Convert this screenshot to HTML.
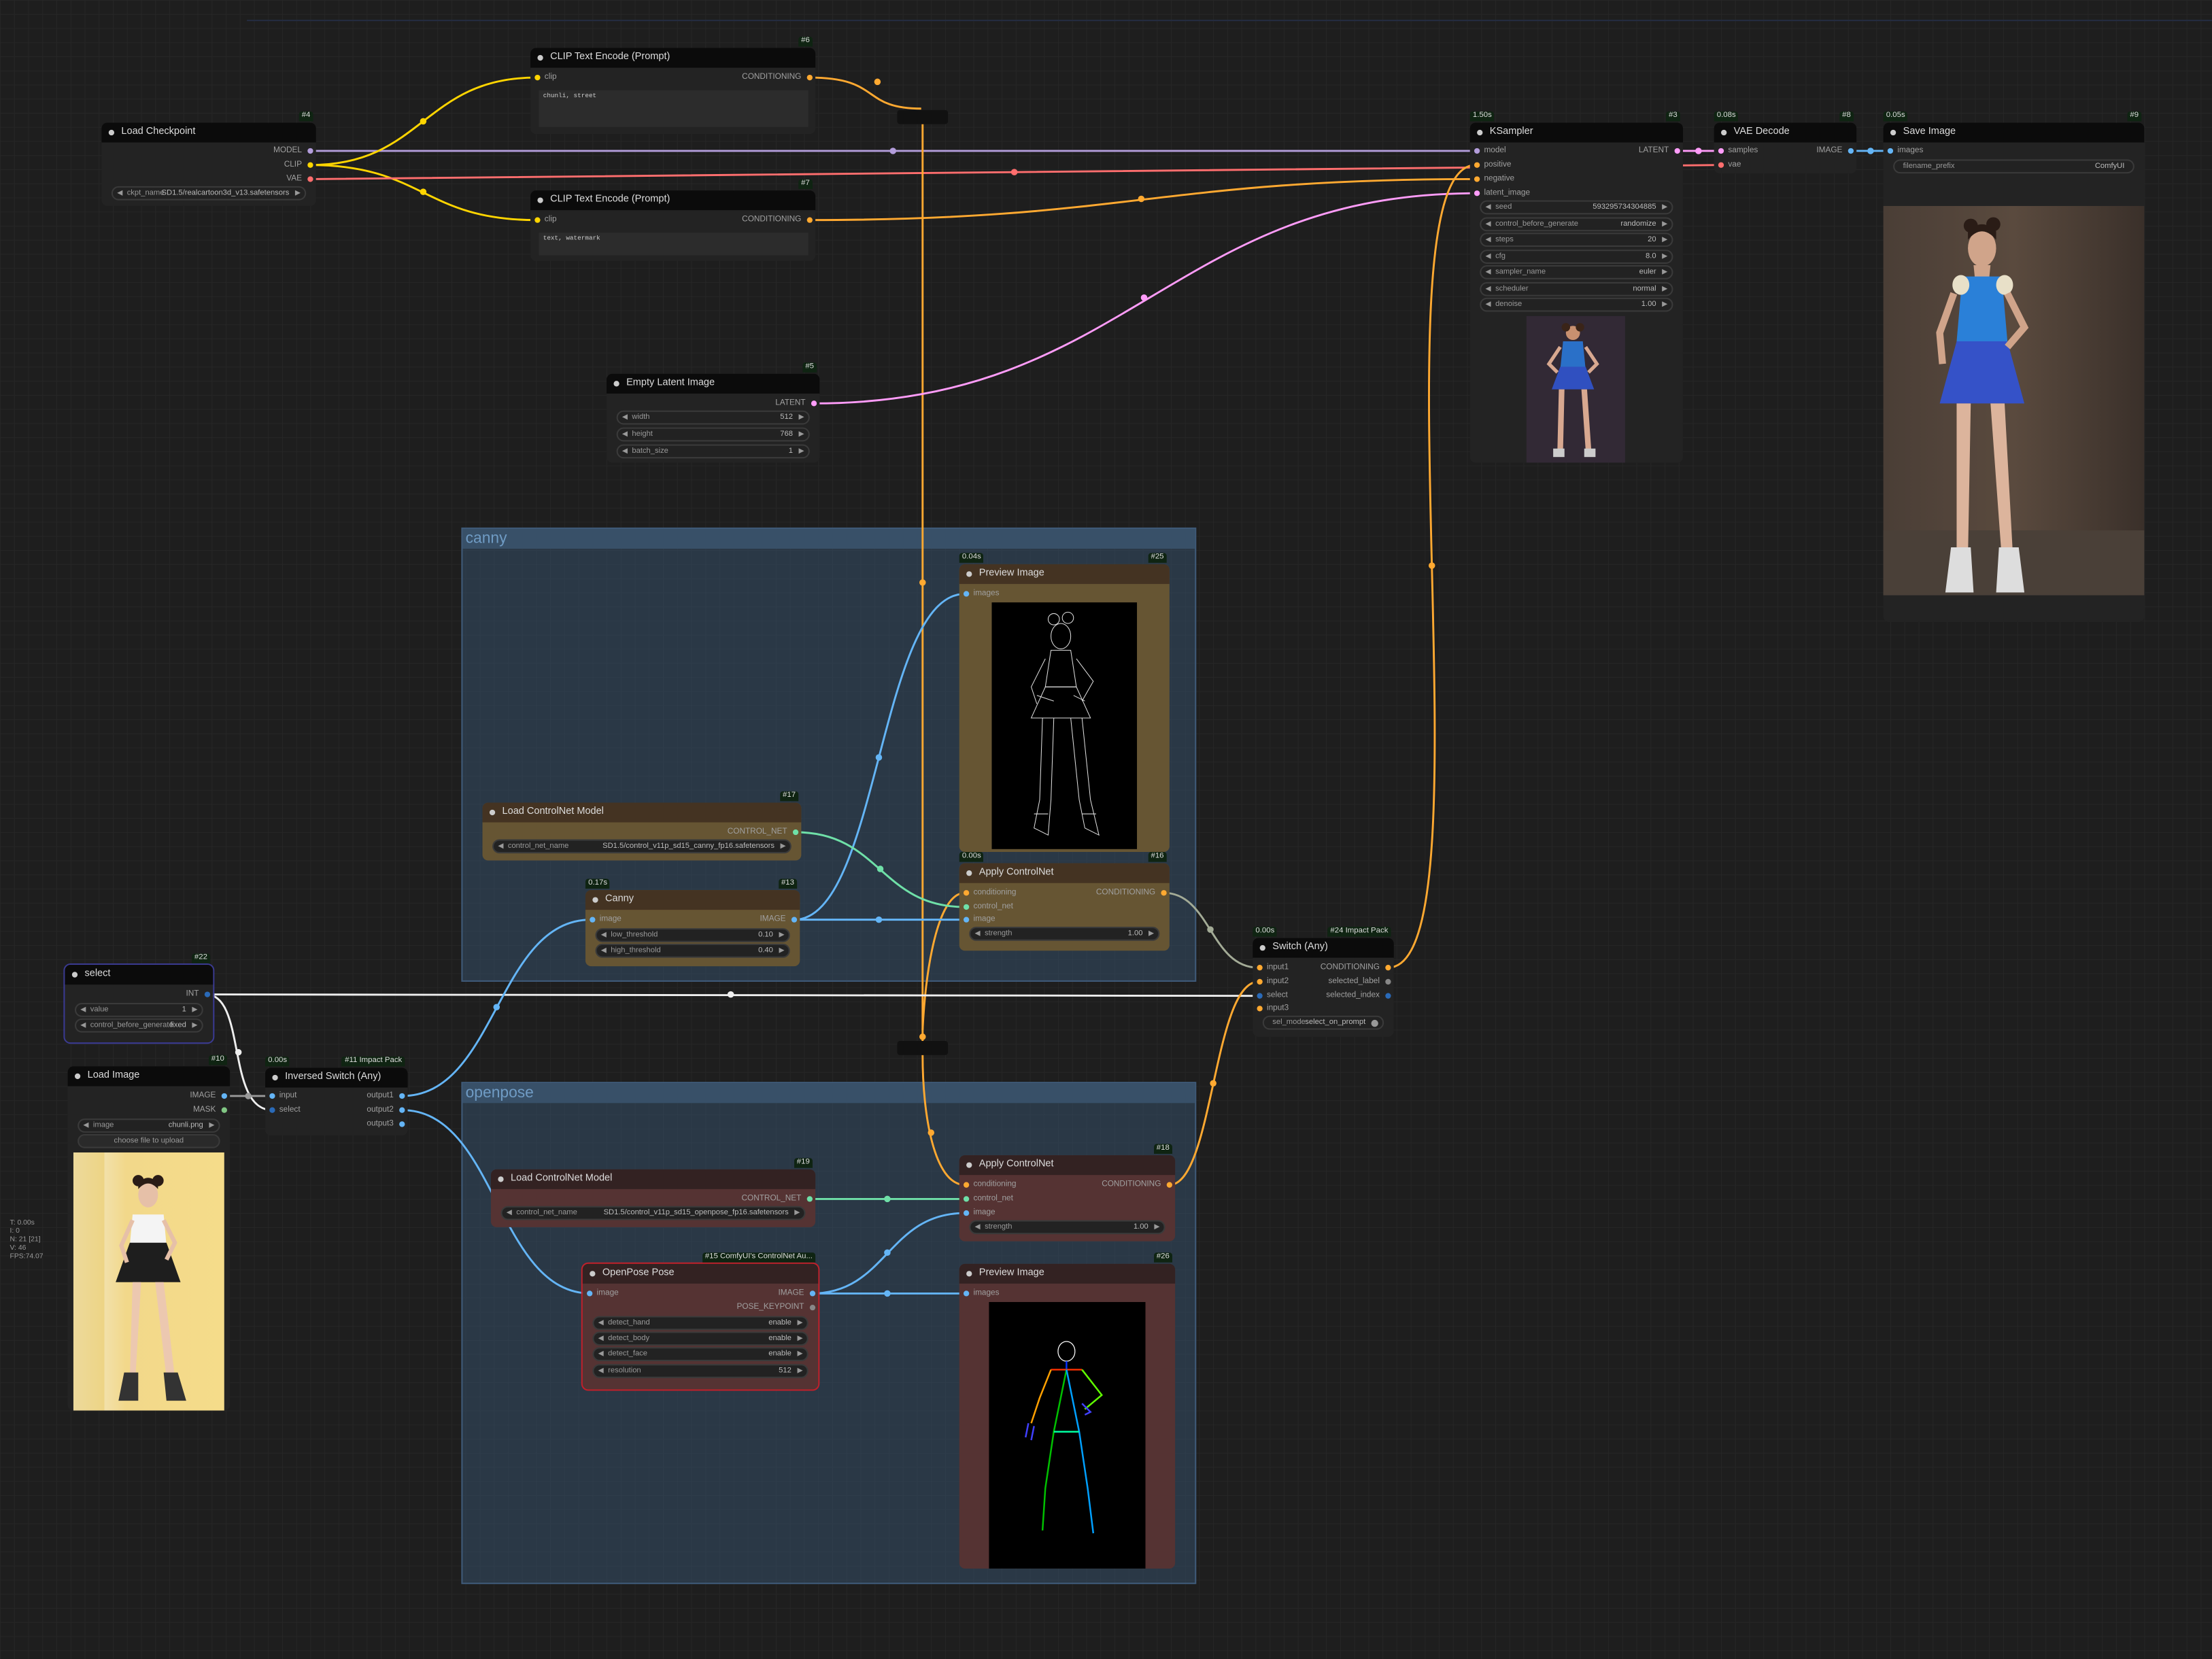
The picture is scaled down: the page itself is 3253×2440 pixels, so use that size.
<!DOCTYPE html>
<html><head><meta charset="utf-8">
<style>
html,body{margin:0;padding:0;width:3253px;height:2440px;overflow:hidden;background:#1c1c1c}
#w{position:absolute;left:0;top:0;width:1568px;height:1176px;transform:scale(2.0746);transform-origin:0 0;
background-color:#1e1e1e;background-image:linear-gradient(#262626 0.5px,transparent 0.5px),linear-gradient(90deg,#262626 0.5px,transparent 0.5px);background-size:10px 10px;font-family:"Liberation Sans",sans-serif;overflow:hidden}
.g{position:absolute;background:rgba(52,78,104,0.55);border:0.5px solid #3f5a78}
.g .gh{height:14px;background:#385068;color:#6f9bc4;font-size:11px;line-height:14px;padding-left:2px}
svg.wires{position:absolute;left:0;top:0}
.n{position:absolute;background:#232323;border-radius:4px;font-size:5.7px;color:#a0a0a0}
.t{height:14px;background:#0b0b0b;border-radius:4px 4px 0 0;color:#ddd;font-size:7px;line-height:14px;padding-left:14px;position:relative;white-space:nowrap}
.t:before{content:"";position:absolute;left:5px;top:5px;width:4px;height:4px;border-radius:50%;background:#ccc}
.cn{background:#665533}.cn .t{background:#443322}
.op{background:#553333}.op .t{background:#332222}
.r{position:absolute;left:0;right:0;height:8px;line-height:8px;white-space:nowrap}
.r .l{position:absolute;left:10px}
.r .o{position:absolute;right:10px}
.dl,.dr{position:absolute;top:2px;width:4px;height:4px;border-radius:50%}
.dl{left:2.5px}.dr{right:2.5px}
.wd{position:absolute;left:7px;right:7px;height:8px;background:#222;border:0.6px solid #3a3a3a;border-radius:5px;line-height:8px;color:#999;font-size:5.4px;white-space:nowrap;overflow:hidden}
.wd .a{position:absolute;left:3px;font-size:5px}
.wd .b{position:absolute;right:3px;font-size:5px}
.wd .k{position:absolute;left:10px}
.wd .v{position:absolute;right:11px;color:#bbb}
.bd{position:absolute;top:-8px;height:7px;line-height:7px;background:#0f2412;color:#ddd;font-size:5.5px;padding:0 2px;border-radius:2px 2px 0 0;white-space:nowrap}
.ta{position:absolute;left:6px;right:5px;background:#2c2c2c;color:#ccc;font-family:"Liberation Mono",monospace;font-size:4.5px;padding:2px 3px;box-sizing:border-box}
.rr{position:absolute;width:36px;height:10px;background:#111;border-radius:2px}
</style></head><body>
<div id="w">
<div style="position:absolute;left:175px;top:14px;width:1393px;height:0.5px;background:#242c40"></div>

<div class="g" style="left:327px;top:374px;width:519px;height:320px"><div class="gh">canny</div></div>
<div class="g" style="left:327px;top:767px;width:519px;height:354px"><div class="gh">openpose</div></div>

<svg class="wires" width="1568" height="1176" viewBox="0 0 1568 1176" fill="none" stroke-width="1.4">
<path d="M220 107 L1046 107" stroke="#b39ddb"/>
<path d="M220 117 C300 117 300 55 380 55" stroke="#ffd500"/>
<path d="M220 117 C300 117 300 156 380 156" stroke="#ffd500"/>
<path d="M220 127 C500 127 940 117 1219 117" stroke="#ff6e6e"/>
<path d="M574 55 C625 55 610 77 653 77" stroke="#ffa931"/>
<path d="M654 88 L654 738" stroke="#ffa931"/>
<path d="M654 730 C656 690 664 633 684 633" stroke="#ffa931"/>
<path d="M654 748 C654 790 662 840 684 840" stroke="#ffa931"/>
<path d="M574 156 C800 156 820 127 1046 127" stroke="#ffa931"/>
<path d="M577 286 C800 286 830 137 1046 137" stroke="#ff9cf9"/>
<path d="M1188 107 L1219 107" stroke="#ff9cf9"/>
<path d="M1311 107 L1339 107" stroke="#64b5f6"/>
<path d="M984 686 C1060 686 970 117 1046 117" stroke="#ffa931"/>
<path d="M563 652 C623 652 623 421 684 421" stroke="#64b5f6"/>
<path d="M563 652 L684 652" stroke="#64b5f6"/>
<path d="M564 590 C624 590 624 643 684 643" stroke="#6fe0a8"/>
<path d="M825 633 C858 633 858 686 892 686" stroke="#a3ab96"/>
<path d="M146 705 L892 706" stroke="#eeeeee"/>
<path d="M146 705 C175 705 160 787 193 787" stroke="#eeeeee"/>
<path d="M159 777 L193 777" stroke="#999"/>
<path d="M285 777 C352 777 352 652 419 652" stroke="#64b5f6"/>
<path d="M285 787 C352 787 352 917 419 917" stroke="#64b5f6"/>
<path d="M575 917 L684 917" stroke="#64b5f6"/>
<path d="M575 917 C629 917 629 860 684 860" stroke="#64b5f6"/>
<path d="M574 850 L684 850" stroke="#6fe0a8"/>
<path d="M829 840 C860 840 860 696 892 696" stroke="#ffa931"/>
<g stroke="none">
<circle cx="633" cy="107" r="2.3" fill="#b39ddb"/>
<circle cx="300" cy="86" r="2.3" fill="#ffd500"/><circle cx="300" cy="136" r="2.3" fill="#ffd500"/>
<circle cx="719" cy="122" r="2.3" fill="#ff6e6e"/>
<circle cx="622" cy="58" r="2.3" fill="#ffa931"/><circle cx="654" cy="413" r="2.3" fill="#ffa931"/><circle cx="654" cy="735" r="2.3" fill="#ffa931"/>
<circle cx="660" cy="803" r="2.3" fill="#ffa931"/><circle cx="809" cy="141" r="2.3" fill="#ffa931"/>
<circle cx="811" cy="211" r="2.3" fill="#ff9cf9"/><circle cx="1204" cy="107" r="2.3" fill="#ff9cf9"/>
<circle cx="1326" cy="107" r="2.3" fill="#64b5f6"/><circle cx="1015" cy="401" r="2.3" fill="#ffa931"/>
<circle cx="623" cy="537" r="2.3" fill="#64b5f6"/><circle cx="623" cy="652" r="2.3" fill="#64b5f6"/>
<circle cx="624" cy="616" r="2.3" fill="#6fe0a8"/><circle cx="858" cy="659" r="2.3" fill="#a3ab96"/>
<circle cx="518" cy="705" r="2.3" fill="#eee"/><circle cx="169" cy="746" r="2.3" fill="#eee"/>
<circle cx="176" cy="777" r="2.3" fill="#999"/><circle cx="352" cy="714" r="2.3" fill="#64b5f6"/>
<circle cx="629" cy="917" r="2.3" fill="#64b5f6"/><circle cx="629" cy="888" r="2.3" fill="#64b5f6"/>
<circle cx="629" cy="850" r="2.3" fill="#6fe0a8"/><circle cx="860" cy="768" r="2.3" fill="#ffa931"/>
</g>
</svg>

<div class="rr" style="left:636px;top:78px"></div>
<div class="rr" style="left:636px;top:738px"></div>

<div class="n" style="left:72px;top:87px;width:152px;height:59px"><div class="bd" style="right:2px">#4</div><div class="t">Load Checkpoint</div>
<div class="r" style="top:16px"><span class="o">MODEL</span><i class="dr" style="background:#b39ddb"></i></div>
<div class="r" style="top:26px"><span class="o">CLIP</span><i class="dr" style="background:#ffd500"></i></div>
<div class="r" style="top:36px"><span class="o">VAE</span><i class="dr" style="background:#ff6e6e"></i></div>
<div class="wd" style="top:45px"><span class="a">◀</span><span class="k">ckpt_name</span><span class="v">SD1.5/realcartoon3d_v13.safetensors</span><span class="b">▶</span></div></div>

<div class="n" style="left:376px;top:34px;width:202px;height:61px"><div class="bd" style="right:2px">#6</div><div class="t">CLIP Text Encode (Prompt)</div>
<div class="r" style="top:17px"><i class="dl" style="background:#ffd500"></i><span class="l">clip</span><span class="o">CONDITIONING</span><i class="dr" style="background:#ffa931"></i></div>
<div class="ta" style="top:30px;height:26px">chunli, street</div></div>
<div class="n" style="left:376px;top:135px;width:202px;height:50px"><div class="bd" style="right:2px">#7</div><div class="t">CLIP Text Encode (Prompt)</div>
<div class="r" style="top:17px"><i class="dl" style="background:#ffd500"></i><span class="l">clip</span><span class="o">CONDITIONING</span><i class="dr" style="background:#ffa931"></i></div>
<div class="ta" style="top:30px;height:16px">text, watermark</div></div>

<div class="n" style="left:1042px;top:87px;width:151px;height:241px"><div class="bd" style="left:0">1.50s</div><div class="bd" style="right:2px">#3</div><div class="t">KSampler</div>
<div class="r" style="top:16px"><i class="dl" style="background:#b39ddb"></i><span class="l">model</span><span class="o">LATENT</span><i class="dr" style="background:#ff9cf9"></i></div>
<div class="r" style="top:26px"><i class="dl" style="background:#ffa931"></i><span class="l">positive</span></div>
<div class="r" style="top:36px"><i class="dl" style="background:#ffa931"></i><span class="l">negative</span></div>
<div class="r" style="top:46px"><i class="dl" style="background:#ff9cf9"></i><span class="l">latent_image</span></div>
<div class="wd" style="top:55px"><span class="a">◀</span><span class="k">seed</span><span class="v">593295734304885</span><span class="b">▶</span></div>
<div class="wd" style="top:67px"><span class="a">◀</span><span class="k">control_before_generate</span><span class="v">randomize</span><span class="b">▶</span></div>
<div class="wd" style="top:78px"><span class="a">◀</span><span class="k">steps</span><span class="v">20</span><span class="b">▶</span></div>
<div class="wd" style="top:90px"><span class="a">◀</span><span class="k">cfg</span><span class="v">8.0</span><span class="b">▶</span></div>
<div class="wd" style="top:101px"><span class="a">◀</span><span class="k">sampler_name</span><span class="v">euler</span><span class="b">▶</span></div>
<div class="wd" style="top:113px"><span class="a">◀</span><span class="k">scheduler</span><span class="v">normal</span><span class="b">▶</span></div>
<div class="wd" style="top:124px"><span class="a">◀</span><span class="k">denoise</span><span class="v">1.00</span><span class="b">▶</span></div>
<svg style="position:absolute;left:40px;top:137px" width="70" height="104" viewBox="0 0 70 104">
<rect width="70" height="104" fill="#2a2230"/><rect x="0" y="0" width="70" height="104" fill="#3a2f3a" opacity="0.5"/>
<circle cx="33" cy="12" r="5" fill="#c89070"/><circle cx="28" cy="8" r="3" fill="#3a2418"/><circle cx="38" cy="8" r="3" fill="#3a2418"/>
<path d="M26 18 L40 18 L42 38 L24 38Z" fill="#2a70c8"/><path d="M24 36 L42 36 L48 52 L18 52Z" fill="#3050c0"/>
<path d="M23 52 L27 52 L26 95 L22 95Z M39 52 L43 52 L46 95 L42 95Z" fill="#d8a890"/>
<rect x="19" y="94" width="8" height="6" fill="#ccc"/><rect x="41" y="94" width="8" height="6" fill="#ccc"/>
<path d="M24 22 L16 34 L22 40 M42 22 L50 34 L44 40" stroke="#d8a890" stroke-width="2.5" fill="none"/></svg></div>

<div class="n" style="left:1215px;top:87px;width:101px;height:36px"><div class="bd" style="left:0">0.08s</div><div class="bd" style="right:2px">#8</div><div class="t">VAE Decode</div>
<div class="r" style="top:16px"><i class="dl" style="background:#ff9cf9"></i><span class="l">samples</span><span class="o">IMAGE</span><i class="dr" style="background:#64b5f6"></i></div>
<div class="r" style="top:26px"><i class="dl" style="background:#ff6e6e"></i><span class="l">vae</span></div></div>

<div class="n" style="left:1335px;top:87px;width:185px;height:354px"><div class="bd" style="left:0">0.05s</div><div class="bd" style="right:2px">#9</div><div class="t">Save Image</div>
<div class="r" style="top:16px"><i class="dl" style="background:#64b5f6"></i><span class="l">images</span></div>
<div class="wd" style="top:26px"><span class="k" style="left:6px">filename_prefix</span><span class="v" style="right:6px">ComfyUI</span></div>
<svg style="position:absolute;left:0;top:59px" width="185" height="276" viewBox="0 0 185 276">
<defs><linearGradient id="sg" x1="0" x2="1"><stop offset="0" stop-color="#4a3e36"/><stop offset="0.5" stop-color="#5a4a3e"/><stop offset="1" stop-color="#3a302a"/></linearGradient></defs>
<rect width="185" height="276" fill="url(#sg)"/>
<rect x="0" y="230" width="185" height="46" fill="#4a4038"/>
<circle cx="62" cy="14" r="5" fill="#2a1c16"/><circle cx="78" cy="13" r="5" fill="#2a1c16"/>
<ellipse cx="70" cy="30" rx="10" ry="13" fill="#d0a48a"/><path d="M60 24 Q70 12 80 24 L80 18 Q70 8 60 18Z" fill="#2a1c16"/>
<path d="M64 42 L76 42 L75 52 L65 52Z" fill="#d0a48a"/>
<path d="M56 50 L84 50 L88 96 L52 96Z" fill="#2a80d8"/>
<ellipse cx="55" cy="56" rx="6" ry="7" fill="#e8e0c8"/><ellipse cx="86" cy="56" rx="6" ry="7" fill="#e8e0c8"/>
<path d="M52 96 L88 96 L100 140 L40 140Z" fill="#3552c8"/>
<path d="M50 62 L40 90 L42 112 M88 62 L100 86 L88 100" stroke="#d0a48a" stroke-width="5" fill="none"/>
<path d="M52 140 L62 140 L60 250 L52 250Z M76 140 L86 140 L92 250 L84 250Z" fill="#dcb49c"/>
<path d="M48 242 L62 242 L64 274 L44 274Z M82 242 L96 242 L100 274 L80 274Z" fill="#ddd"/>
</svg></div>

<div class="n" style="left:430px;top:265px;width:151px;height:63px"><div class="bd" style="right:2px">#5</div><div class="t">Empty Latent Image</div>
<div class="r" style="top:17px"><span class="o">LATENT</span><i class="dr" style="background:#ff9cf9"></i></div>
<div class="wd" style="top:26px"><span class="a">◀</span><span class="k">width</span><span class="v">512</span><span class="b">▶</span></div>
<div class="wd" style="top:38px"><span class="a">◀</span><span class="k">height</span><span class="v">768</span><span class="b">▶</span></div>
<div class="wd" style="top:50px"><span class="a">◀</span><span class="k">batch_size</span><span class="v">1</span><span class="b">▶</span></div></div>

<div class="n cn" style="left:680px;top:400px;width:149px;height:204px"><div class="bd" style="left:0">0.04s</div><div class="bd" style="right:2px">#25</div><div class="t">Preview Image</div>
<div class="r" style="top:17px"><i class="dl" style="background:#64b5f6"></i><span class="l">images</span></div>
<svg style="position:absolute;left:23px;top:27px" width="103" height="175" viewBox="0 0 103 175">
<rect width="103" height="175" fill="#000"/>
<g stroke="#ddd" stroke-width="0.5" fill="none">
<circle cx="44" cy="12" r="4"/><circle cx="54" cy="11" r="4"/><ellipse cx="49" cy="24" rx="7" ry="9"/>
<path d="M42 34 L56 34 L60 60 L38 60Z"/><path d="M38 60 L60 60 L70 82 L28 82Z"/>
<path d="M38 40 L28 60 L32 72 M60 40 L72 56 L64 70"/>
<path d="M36 82 L34 140 L30 160 L40 165 L42 140 L44 82 M56 82 L62 140 L66 160 L76 165 L70 140 L64 82"/>
<path d="M32 66 L44 70 M58 66 L66 70 M30 150 L40 150 M64 150 L74 150"/></g></svg></div>

<div class="n cn" style="left:680px;top:612px;width:149px;height:62px"><div class="bd" style="left:0">0.00s</div><div class="bd" style="right:2px">#16</div><div class="t">Apply ControlNet</div>
<div class="r" style="top:17px"><i class="dl" style="background:#ffa931"></i><span class="l">conditioning</span><span class="o">CONDITIONING</span><i class="dr" style="background:#ffa931"></i></div>
<div class="r" style="top:27px"><i class="dl" style="background:#6fe0a8"></i><span class="l">control_net</span></div>
<div class="r" style="top:36px"><i class="dl" style="background:#64b5f6"></i><span class="l">image</span></div>
<div class="wd" style="top:45px"><span class="a">◀</span><span class="k">strength</span><span class="v">1.00</span><span class="b">▶</span></div></div>

<div class="n cn" style="left:342px;top:569px;width:226px;height:41px"><div class="bd" style="right:2px">#17</div><div class="t">Load ControlNet Model</div>
<div class="r" style="top:17px"><span class="o">CONTROL_NET</span><i class="dr" style="background:#6fe0a8"></i></div>
<div class="wd" style="top:26px"><span class="a">◀</span><span class="k">control_net_name</span><span class="v">SD1.5/control_v11p_sd15_canny_fp16.safetensors</span><span class="b">▶</span></div></div>

<div class="n cn" style="left:415px;top:631px;width:152px;height:54px"><div class="bd" style="left:0">0.17s</div><div class="bd" style="right:2px">#13</div><div class="t">Canny</div>
<div class="r" style="top:17px"><i class="dl" style="background:#64b5f6"></i><span class="l">image</span><span class="o">IMAGE</span><i class="dr" style="background:#64b5f6"></i></div>
<div class="wd" style="top:27px"><span class="a">◀</span><span class="k">low_threshold</span><span class="v">0.10</span><span class="b">▶</span></div>
<div class="wd" style="top:38px"><span class="a">◀</span><span class="k">high_threshold</span><span class="v">0.40</span><span class="b">▶</span></div></div>

<div class="n" style="left:46px;top:684px;width:105px;height:55px;outline:1px solid #3a3a90"><div class="bd" style="right:2px">#22</div><div class="t">select</div>
<div class="r" style="top:17px"><span class="o">INT</span><i class="dr" style="background:#2a6ab8"></i></div>
<div class="wd" style="top:27px"><span class="a">◀</span><span class="k">value</span><span class="v">1</span><span class="b">▶</span></div>
<div class="wd" style="top:38px"><span class="a">◀</span><span class="k">control_before_generate</span><span class="v">fixed</span><span class="b">▶</span></div></div>

<div class="n" style="left:888px;top:665px;width:100px;height:70px"><div class="bd" style="left:0">0.00s</div><div class="bd" style="right:2px">#24 Impact Pack</div><div class="t">Switch (Any)</div>
<div class="r" style="top:17px"><i class="dl" style="background:#ffa931"></i><span class="l">input1</span><span class="o">CONDITIONING</span><i class="dr" style="background:#ffa931"></i></div>
<div class="r" style="top:27px"><i class="dl" style="background:#ffa931"></i><span class="l">input2</span><span class="o">selected_label</span><i class="dr" style="background:#888"></i></div>
<div class="r" style="top:37px"><i class="dl" style="background:#2a6ab8"></i><span class="l">select</span><span class="o">selected_index</span><i class="dr" style="background:#2a6ab8"></i></div>
<div class="r" style="top:46px"><i class="dl" style="background:#ffa931"></i><span class="l">input3</span></div>
<div class="wd" style="top:55px"><span class="k" style="left:6px">sel_mode</span><span class="v" style="right:12px">select_on_prompt</span><i style="position:absolute;right:3px;top:1.5px;width:5px;height:5px;border-radius:50%;background:#999"></i></div></div>

<div class="n" style="left:48px;top:756px;width:115px;height:244px"><div class="bd" style="right:2px">#10</div><div class="t">Load Image</div>
<div class="r" style="top:17px"><span class="o">IMAGE</span><i class="dr" style="background:#64b5f6"></i></div>
<div class="r" style="top:27px"><span class="o">MASK</span><i class="dr" style="background:#81c784"></i></div>
<div class="wd" style="top:37px"><span class="a">◀</span><span class="k">image</span><span class="v">chunli.png</span><span class="b">▶</span></div>
<div class="wd" style="top:48px;text-align:center;background:#2a2a2a">choose file to upload</div>
<svg style="position:absolute;left:4px;top:61px" width="107" height="183" viewBox="0 0 107 183">
<defs><linearGradient id="lg" x1="0" x2="1"><stop offset="0" stop-color="#f3ecd8"/><stop offset="0.35" stop-color="#f2d88a"/><stop offset="1" stop-color="#f5dc8a"/></linearGradient></defs>
<rect width="107" height="183" fill="url(#lg)"/><rect x="0" y="0" width="22" height="183" fill="#e8c860" opacity="0.5"/>
<circle cx="46" cy="20" r="4" fill="#2a1c16"/><circle cx="60" cy="20" r="4" fill="#2a1c16"/>
<ellipse cx="53" cy="30" rx="7" ry="9" fill="#e6c0a8"/><path d="M46 26 Q53 18 60 26 L60 22 Q53 14 46 22Z" fill="#2a1c16"/>
<path d="M42 44 L64 44 L66 66 L40 66Z" fill="#f4f4f4"/>
<path d="M40 64 L66 64 L76 92 L30 92Z" fill="#1e1e1e"/>
<path d="M42 48 L34 66 L38 78 M64 48 L72 64 L66 76" stroke="#e6c0a8" stroke-width="3" fill="none"/>
<path d="M42 92 L48 92 L44 160 L40 160Z M58 92 L64 92 L72 160 L66 160Z" fill="#ecc8b0"/>
<path d="M36 156 L46 156 L46 176 L32 176Z M64 156 L74 156 L80 176 L66 176Z" fill="#333"/>
</svg></div>

<div class="n" style="left:188px;top:757px;width:101px;height:48px"><div class="bd" style="left:0">0.00s</div><div class="bd" style="right:2px">#11 Impact Pack</div><div class="t">Inversed Switch (Any)</div>
<div class="r" style="top:16px"><i class="dl" style="background:#64b5f6"></i><span class="l">input</span><span class="o">output1</span><i class="dr" style="background:#64b5f6"></i></div>
<div class="r" style="top:26px"><i class="dl" style="background:#2a6ab8"></i><span class="l">select</span><span class="o">output2</span><i class="dr" style="background:#64b5f6"></i></div>
<div class="r" style="top:36px"><span class="o">output3</span><i class="dr" style="background:#64b5f6"></i></div></div>

<div class="n op" style="left:348px;top:829px;width:230px;height:41px"><div class="bd" style="right:2px">#19</div><div class="t">Load ControlNet Model</div>
<div class="r" style="top:17px"><span class="o">CONTROL_NET</span><i class="dr" style="background:#6fe0a8"></i></div>
<div class="wd" style="top:26px"><span class="a">◀</span><span class="k">control_net_name</span><span class="v">SD1.5/control_v11p_sd15_openpose_fp16.safetensors</span><span class="b">▶</span></div></div>

<div class="n op" style="left:680px;top:819px;width:153px;height:61px"><div class="bd" style="right:2px">#18</div><div class="t">Apply ControlNet</div>
<div class="r" style="top:17px"><i class="dl" style="background:#ffa931"></i><span class="l">conditioning</span><span class="o">CONDITIONING</span><i class="dr" style="background:#ffa931"></i></div>
<div class="r" style="top:27px"><i class="dl" style="background:#6fe0a8"></i><span class="l">control_net</span></div>
<div class="r" style="top:37px"><i class="dl" style="background:#64b5f6"></i><span class="l">image</span></div>
<div class="wd" style="top:46px"><span class="a">◀</span><span class="k">strength</span><span class="v">1.00</span><span class="b">▶</span></div></div>

<div class="n op" style="left:413px;top:896px;width:167px;height:89px;outline:1.5px solid #c0202a"><div class="bd" style="right:2px">#15 ComfyUI's ControlNet Au...</div><div class="t">OpenPose Pose</div>
<div class="r" style="top:17px"><i class="dl" style="background:#64b5f6"></i><span class="l">image</span><span class="o">IMAGE</span><i class="dr" style="background:#64b5f6"></i></div>
<div class="r" style="top:27px"><span class="o">POSE_KEYPOINT</span><i class="dr" style="background:#888"></i></div>
<div class="wd" style="top:37px"><span class="a">◀</span><span class="k">detect_hand</span><span class="v">enable</span><span class="b">▶</span></div>
<div class="wd" style="top:48px"><span class="a">◀</span><span class="k">detect_body</span><span class="v">enable</span><span class="b">▶</span></div>
<div class="wd" style="top:59px"><span class="a">◀</span><span class="k">detect_face</span><span class="v">enable</span><span class="b">▶</span></div>
<div class="wd" style="top:71px"><span class="a">◀</span><span class="k">resolution</span><span class="v">512</span><span class="b">▶</span></div></div>

<div class="n op" style="left:680px;top:896px;width:153px;height:216px"><div class="bd" style="right:2px">#26</div><div class="t">Preview Image</div>
<div class="r" style="top:17px"><i class="dl" style="background:#64b5f6"></i><span class="l">images</span></div>
<svg style="position:absolute;left:21px;top:27px" width="111" height="189" viewBox="0 0 111 189">
<rect width="111" height="189" fill="#000"/>
<g fill="none" stroke-width="1.2">
<ellipse cx="55" cy="35" rx="6" ry="7" stroke="#fff" stroke-width="0.6"/>
<path d="M55 42 L55 48" stroke="#0030ff"/>
<path d="M44 48 L66 48" stroke="#ff3000"/>
<path d="M44 48 L36 68 L30 86" stroke="#ffa000"/>
<path d="M66 48 L80 66 L68 76" stroke="#60ff00"/>
<path d="M55 48 L46 92 L40 132 L38 162" stroke="#00c000"/>
<path d="M55 48 L64 92 L70 132 L74 164" stroke="#00a0ff"/>
<path d="M46 92 L64 92" stroke="#00ffa0"/>
<path d="M28 86 L26 96 M32 88 L30 98" stroke="#4040ff"/>
<path d="M66 72 L72 78 L68 80" stroke="#4040ff"/>
</g></svg></div>

<div style="position:absolute;left:7px;top:864px;color:#999;font-size:5px;line-height:6px">T: 0.00s<br>I: 0<br>N: 21 [21]<br>V: 46<br>FPS:74.07</div>
</div>
</body></html>
